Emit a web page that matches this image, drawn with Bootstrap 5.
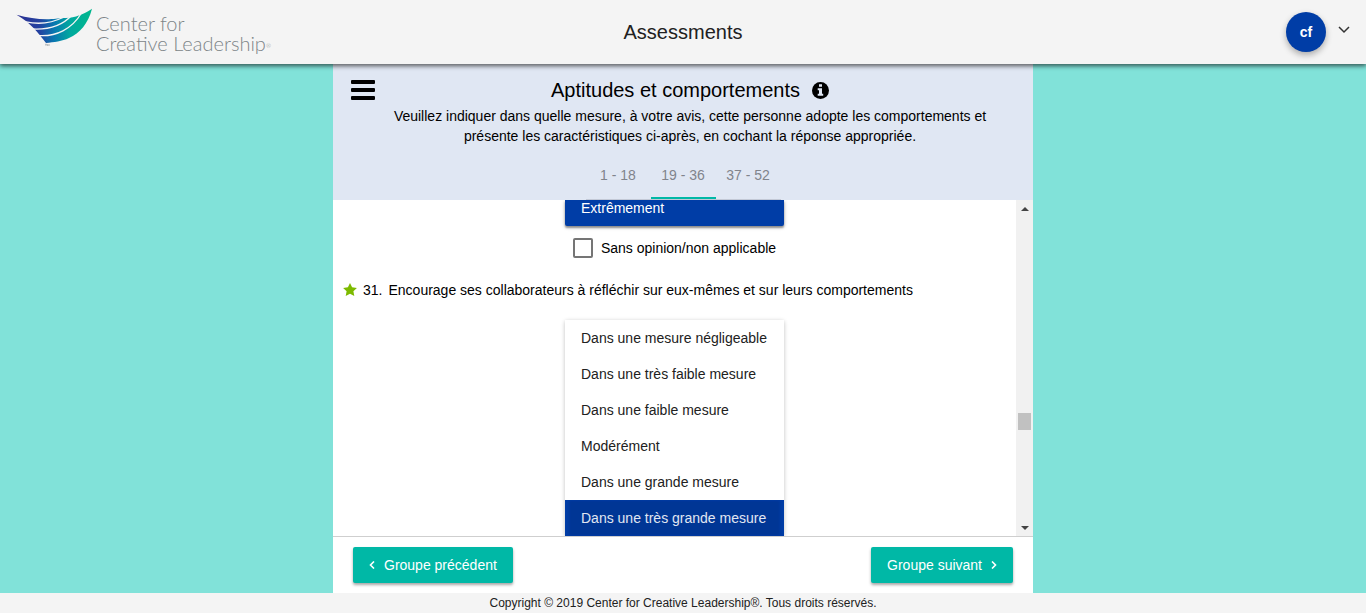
<!DOCTYPE html>
<html lang="fr">
<head>
<meta charset="utf-8">
<meta name="viewport" content="width=device-width, initial-scale=1">
<title>Assessments</title>
<link href="https://cdn.jsdelivr.net/npm/bootstrap@5.3.0/dist/css/bootstrap.min.css" rel="stylesheet">
<style>
  body { font-family: "Liberation Sans", Arial, sans-serif; font-size: 14px; line-height: 20px; color: #000; background: #81e2d9; }
  .topbar { height: 64px; background: #f4f4f4; box-shadow: 0 2px 4px rgba(0,0,0,.45), 0 1px 6px rgba(0,0,0,.3); z-index: 2; padding: 0 16px; }
  .topbar h1 { font-size: 20px; line-height: 24px; color: #212121; }
  .side { flex: 1 1 0; }
  .brand { color: #7d8588; font-family: Lato, Roboto, sans-serif; font-size: 20px; line-height: 20px; font-weight: 300; white-space: nowrap; text-decoration: none; }
  .brand-text { padding-top: 5px; }
  .brand sup { font-size: 6px; }
  .avatar { width: 40px; height: 40px; border: 0; background: #003da6; color: #fff; font-weight: 700; box-shadow: 0 3px 6px rgba(0,0,0,.3); }
  .panel { width: 100%; max-width: 700px; min-height: 0; background: #fff; }
  .panel-head { background: #e0e7f3; height: 136px; padding: 14px 18px 0; }
  .panel-head h2 { font-size: 20px; line-height: 24px; }
  .bare { border: 0; background: none; padding: 0; line-height: 0; color: #000; }
  .heading { padding-right: 10px; }
  .lead-in { padding: 4px 12px 0; }
  .pages { width: 195px; height: 50px; border-bottom: 1px solid #c3c9d6; }
  .pages a { flex: 1 1 0; line-height: 50px; height: 49px; color: #80848c; text-decoration: none; border-bottom: 2px solid transparent; }
  .pages a.active { border-color: #00b8a6; }
  .questions { min-height: 0; }
  .options { width: 219px; border-radius: 2px; box-shadow: 0 1px 4px rgba(0,0,0,.25); }
  .options button { border: 0; background: #fff; color: #212121; height: 36px; padding: 0 16px; text-align: left; }
  .options button.chosen { background: #003da6; color: #fff; }
  .options button.pressed { background: #003695; color: #e0e6f2; box-shadow: inset 4px 0 3px #003da6, inset -4px 0 3px #003da6; }
  .options.cut button { height: 26px; line-height: 16px; padding-bottom: 10px; border-radius: 0 0 2px 2px; box-shadow: 0 2px 2px rgba(0,0,0,.35); }
  .opt-out { padding: 12px 0; }
  .opt-out input { appearance: none; width: 20px; height: 20px; border: 2px solid #757575; border-radius: 2px; margin: 0; }
  .question { padding: 10px 10px 20px; gap: 6px; }
  .track { width: 17px; background: #f1f1f1; }
  .track .thumb { width: 13px; height: 17px; background: #c1c1c1; }
  .track .above { flex: 195 1 0; }
  .track .below { flex: 89 1 0; }
  .track button { height: 17px; }
  .actions { border-top: 1px solid #cfcfcf; padding: 10px 20px; }
  .actions .btn { background: #00b8a6; color: #fff; border: 0; border-radius: 2px; height: 36px; padding: 0 16px; font-size: 14px; line-height: 36px; box-shadow: 0 2px 3px rgba(0,0,0,.35); }
  .legal { background: #f4f4f4; color: #212121; font-size: 12px; }
</style>
<script src="https://cdn.jsdelivr.net/npm/bootstrap@5.3.0/dist/js/bootstrap.bundle.min.js"></script>
</head>
<body class="vh-100 d-flex flex-column overflow-hidden">
<header class="topbar d-flex align-items-center flex-shrink-0 position-relative">
  <div class="side">
    <a class="brand d-inline-flex gap-1" href="#">
      <svg width="76" height="44" viewBox="16 8 76 44" aria-hidden="true">
        <defs><linearGradient id="wing" x1="0" x2="1"><stop offset="0" stop-color="#2e3192"/><stop offset=".3" stop-color="#2340a0"/><stop offset=".5" stop-color="#0878b0"/><stop offset=".72" stop-color="#00aa9e"/><stop offset="1" stop-color="#00b78c"/></linearGradient></defs>
        <path fill="url(#wing)" d="M16.500 14.800C28 18 38 19.400 49 19.200C56 19 60 18 66 18C75 18 84 14 92 8.800C88 24 80 33 69 38C62 41.500 54 42 46 43C39 34 31 23 16.500 14.800Z"/>
        <path fill="none" stroke="#f4f4f4" stroke-width="1.300" d="M26 21.800C40 25 54 22 64 17M32 29C50 30 63 25 72 15M38 35.500C56 37 72 29 81.500 13"/>
        <path fill="none" stroke="#a5a9ab" stroke-width=".7" d="M45 44.300h2M46 44.300v1.700M47.500 46v-1.700l.8 1 .8-1V46"/>
      </svg>
      <span class="brand-text"><span class="d-block">Center for</span><span class="d-block">Creative Leadership<sup>®</sup></span></span>
    </a>
  </div>
  <h1 class="m-0 fw-normal">Assessments</h1>
  <div class="side d-flex justify-content-end align-items-center">
    <button class="avatar rounded-circle" type="button">cf</button>
    <button class="bare ms-2 ps-1 pb-1" type="button" aria-label="Menu du compte"><svg width="12" height="8" viewBox="0 0 12 8" fill="none" stroke="#333" stroke-width="1.500"><path d="M1 1l5 5 5-5"/></svg></button>
  </div>
</header>
<main class="panel mx-auto flex-grow-1 d-flex flex-column">
  <section class="panel-head flex-shrink-0">
    <div class="d-flex align-items-start">
      <button class="bare" type="button" aria-label="Menu"><svg width="24" height="24" viewBox="0 0 24 24"><path d="M0 3q0-1 1-1h22q1 0 1 1v2q0 1-1 1H1Q0 6 0 5zM0 11q0-1 1-1h22q1 0 1 1v2q0 1-1 1H1q-1 0-1-1zM0 19q0-1 1-1h22q1 0 1 1v2q0 1-1 1H1q-1 0-1-1z"/></svg></button>
      <div class="heading flex-grow-1 text-center">
        <div class="d-flex justify-content-center align-items-center"><h2 class="m-0 fw-normal">Aptitudes et comportements</h2>
          <button class="bare ms-2 ps-1" type="button" aria-label="Informations"><svg width="17" height="17" viewBox="0 0 17 17"><circle cx="8.500" cy="8.500" r="8.500"/><path fill="#e0e7f3" d="M7 2.200h3v2.600H7zM5.700 6.200H10v5.600h1.200v2H5.700v-2H7V8.200H5.700z"/></svg></button></div>
        <p class="lead-in m-0">Veuillez indiquer dans quelle mesure, à votre avis, cette personne adopte les comportements et présente les caractéristiques ci-après, en cochant la réponse appropriée.</p>
      </div>
    </div>
    <nav class="pages d-flex mx-auto text-center mt-1"><a href="#">1 - 18</a><a class="active" href="#">19 - 36</a><a href="#">37 - 52</a></nav>
  </section>
  <section class="questions flex-grow-1 d-flex">
    <div class="flex-grow-1 overflow-hidden">
      <div class="options cut mx-auto d-grid"><button class="chosen" type="button">Extrêmement</button></div>
      <div class="opt-out d-flex justify-content-center gap-2"><input type="checkbox" id="na30"><label for="na30">Sans opinion/non applicable</label></div>
      <p class="question m-0 d-flex align-items-center"><svg width="14" height="14" viewBox="0 0 14 14" fill="#7dba00"><path d="M7 0l2.100 4.300 4.800.7-3.500 3.300.9 4.700L7 10.800 2.700 13l.9-4.700L.1 5l4.800-.7z"/></svg><span>31.</span><span>Encourage ses collaborateurs à réfléchir sur eux-mêmes et sur leurs comportements</span></p>
      <div class="options mx-auto d-grid">
        <button type="button">Dans une mesure négligeable</button>
        <button type="button">Dans une très faible mesure</button>
        <button type="button">Dans une faible mesure</button>
        <button type="button">Modérément</button>
        <button type="button">Dans une grande mesure</button>
        <button class="chosen pressed" type="button">Dans une très grande mesure</button>
      </div>
    </div>
    <div class="track d-flex flex-column align-items-center">
      <button class="bare" type="button" aria-label="Défiler vers le haut"><svg width="8" height="4" viewBox="0 0 8 4" fill="#444"><path d="M4 0l4 4H0z"/></svg></button>
      <div class="above"></div><div class="thumb"></div><div class="below"></div>
      <button class="bare" type="button" aria-label="Défiler vers le bas"><svg width="8" height="4" viewBox="0 0 8 4" fill="#444"><path d="M4 4l4-4H0z"/></svg></button>
    </div>
  </section>
  <section class="actions flex-shrink-0 d-flex justify-content-between">
    <button class="btn d-flex align-items-center gap-2" type="button"><svg width="7" height="8" viewBox="0 0 7 8" fill="none" stroke="#fff" stroke-width="1.600"><path d="M5 0.500L1.500 4 5 7.500"/></svg>Groupe précédent</button>
    <button class="btn d-flex align-items-center gap-2" type="button">Groupe suivant<svg width="7" height="8" viewBox="0 0 7 8" fill="none" stroke="#fff" stroke-width="1.600"><path d="M2 0.500L5.500 4 2 7.500"/></svg></button>
  </section>
</main>
<footer class="legal flex-shrink-0 text-center">Copyright © 2019 Center for Creative Leadership®. Tous droits réservés.</footer>
</body>
</html>
